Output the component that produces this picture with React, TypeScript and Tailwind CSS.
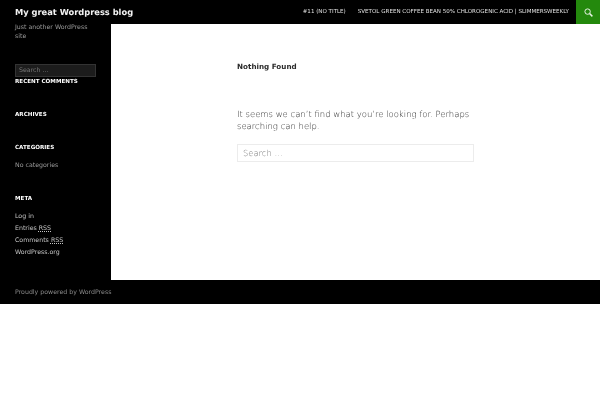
const Widget = ({ title, className, children }: { title: string; className: string; children?: React.ReactNode }) => (
  <div className={className}>
    <h2 className="text-[5.6px] font-bold uppercase leading-[12px] text-white">{title}</h2>
    {children}
  </div>
);

export default function App() {
  return (
    <div className="font-['DejaVu_Sans',sans-serif] [text-rendering:geometricPrecision] bg-white h-[400px] overflow-hidden">
      {/* Header */}
      <header className="flex h-6 items-center justify-between bg-black">
        <h1 className="pl-[15px] text-[8.3px] font-bold text-[#f2f2f2] blur-[0.3px]">My great Wordpress blog</h1>
        <div className="flex h-6 items-center">
          <nav className="flex items-center gap-[12px] pr-[7px] text-[5.55px] uppercase text-[#e0e0e0] blur-[0.3px]">
            <a>#11 (no title)</a>
            <a>Svetol Green Coffee Bean 50% Chlorogenic Acid | SlimmersWeekly</a>
          </nav>
          <div className="flex h-6 w-6 items-center justify-center bg-[#24890d]">
            <svg width="9" height="9" viewBox="0 0 10 10" fill="none" stroke="#e8f3e6" strokeWidth="1.1">
              <circle cx="4" cy="4" r="3" />
              <path d="M6.2 6.2 9.3 9.3" strokeWidth="1.6" />
            </svg>
          </div>
        </div>
      </header>

      <div className="flex h-[256px] bg-black">
        {/* Sidebar */}
        <aside className="w-[111px] shrink-0 px-[15px] blur-[0.3px]">
          <p className="mt-[-1px] text-[6.25px] leading-[9px] text-[#9a9a9a]">Just another WordPress site</p>
          <div className="mt-[23px] flex h-[13px] w-[81px] items-center border border-[#333] bg-[#1c1c1c] px-[3px] text-[6.25px] text-[#777]">Search …</div>
          <Widget title="Recent Comments" className="mt-[-1px]" />
          <Widget title="Archives" className="mt-[21px]" />
          <Widget title="Categories" className="mt-[21px]">
            <p className="mt-[6px] text-[6.25px] leading-[12px] text-[#9a9a9a]">No categories</p>
          </Widget>
          <Widget title="Meta" className="mt-[21px]">
            <ul className="mt-[6px] text-[6.25px] leading-[12px] text-[#c4c4c4]">
              <li>Log in</li>
              <li>Entries <abbr className="underline decoration-dotted">RSS</abbr></li>
              <li>Comments <abbr className="underline decoration-dotted">RSS</abbr></li>
              <li>WordPress.org</li>
            </ul>
          </Widget>
        </aside>

        {/* Content */}
        <main className="flex-1 bg-white pl-[126px] pt-[36px]">
          <div className="w-[237px] blur-[0.3px]">
            <h1 className="mt-[1px] text-[7.2px] font-bold leading-[12px] text-[#2b2b2b]">Nothing Found</h1>
            <p className="mt-[35px] text-[8.47px] font-extralight leading-[12px] text-[#2b2b2b]">
              It seems we can’t find what you’re looking for. Perhaps searching can help.
            </p>
            <div className="mt-[12px] flex h-[18px] items-center border border-[#ececec] px-[5px] text-[8.4px] font-extralight text-[#777]">Search …</div>
          </div>
        </main>
      </div>

      {/* Footer */}
      <footer className="flex h-[24px] items-center bg-black pl-[15px] pt-[1px] text-[6.25px] text-[#8a8a8a]">
        <span className="blur-[0.3px]">Proudly powered by WordPress</span>
      </footer>
    </div>
  );
}
